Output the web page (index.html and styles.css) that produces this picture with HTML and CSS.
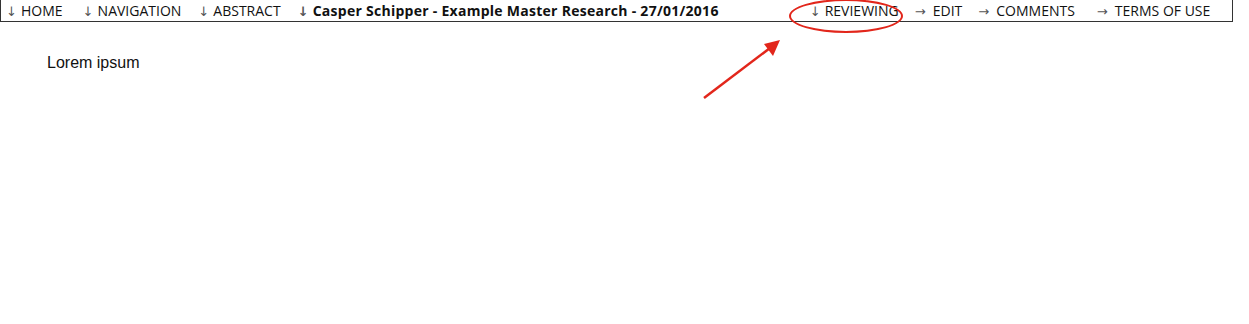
FILE: index.html
```html
<html>
	<head>
		<title>Example Master Research</title>
		<link rel="stylesheet" href="styles.css">
	</head>
	<body>
		<div id="nav">
			<a class="item home" href="#"><span class="arr down">&darr;</span>HOME</a>
			<a class="item" href="#"><span class="arr down">&darr;</span>NAVIGATION</a>
			<a class="item" href="#"><span class="arr down">&darr;</span>ABSTRACT</a>
			<a class="item title" href="#"><span class="arr down">&darr;</span>Casper Schipper - Example Master Research - 27/01/2016</a>
			<a class="item reviewing" href="#"><span class="arr down">&darr;</span>REVIEWING</a>
			<a class="item edit" href="#"><span class="arr right">&rarr;</span>EDIT</a>
			<a class="item comments" href="#"><span class="arr right">&rarr;</span>COMMENTS</a>
			<a class="item" href="#"><span class="arr right">&rarr;</span>TERMS OF USE</a>
		</div>
		<div id="content">Lorem ipsum</div>

		<div class="ring"></div>
		<svg class="pointer" width="90" height="70" viewBox="0 0 90 70">
			<line x1="4" y1="66" x2="70" y2="16" stroke="#e2261b" stroke-width="2.5"/>
			<polygon points="80,8 64,12 73,24" fill="#e2261b"/>
		</svg>
	</body>
</html>
```

FILE: styles.css
```css
body {
	margin: 0;
	background: #fff;
	font-family: "Liberation Sans", Arial, sans-serif;
}

#nav {
	display: flex;
	align-items: center;
	width: 1233px;
	height: 22px;
	border: 1px solid #333;
	border-top: none;
	padding-left: 5px;
	box-sizing: border-box;
	font-family: "Open Sans", sans-serif;
	font-size: 14px;
	white-space: nowrap;
}

#nav a {
	color: #111;
	text-decoration: none;
	margin-right: 17px;
}

.arr {
	display: inline-block;
	color: #555;
	font-family: "DejaVu Sans", sans-serif;
	font-size: 13px;
}

.arr.down {
	width: 15px;
}

.arr.right {
	width: 18px;
}

#nav a.home {
	margin-right: 20px;
}

#nav a.title {
	font-weight: bold;
	letter-spacing: 0.27px;
	margin-right: 91px;
}

#nav a.reviewing {
	margin-right: 16px;
}

#nav a.edit {
	margin-right: 16px;
}

#nav a.comments {
	margin-right: 22px;
}

#content {
	padding: 32px 0 0 47px;
	font-size: 16px;
	color: #111;
}

.ring {
	position: absolute;
	left: 789px;
	top: -1px;
	width: 110px;
	height: 30px;
	border: 2px solid #e2261b;
	border-radius: 50%;
}

.pointer {
	position: absolute;
	left: 700px;
	top: 32px;
}
```
